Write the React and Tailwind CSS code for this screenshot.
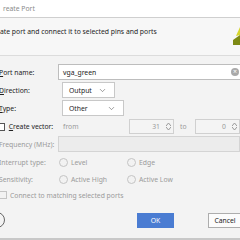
import { ChevronDown } from "lucide-react";

function Select({ value, width }) {
  return (
    <div
      className={`flex items-center justify-between h-[16px] border border-[#c8c8c8] bg-white pl-[6px] pr-[7px] ml-[1px] ${width}`}
    >
      <span>{value}</span>
      <ChevronDown size={9} strokeWidth={1.5} className="text-[#555]" />
    </div>
  );
}

function Spin({ value }) {
  return (
    <div className="flex items-center h-[15px] w-[47px] border border-[#d0d0d0] bg-[#f4f4f4] text-[#999]">
      <span className="flex-1 text-right pr-[4px]">{value}</span>
      <div className="flex flex-col items-center justify-center w-[9px]">
        <svg width="5" height="3" viewBox="0 0 5 3"><path d="M0 3 L2.5 0 L5 3" fill="none" stroke="#999" strokeWidth="1" /></svg>
        <svg width="5" height="3" viewBox="0 0 5 3" className="mt-[1px]"><path d="M0 0 L2.5 3 L5 0" fill="none" stroke="#999" strokeWidth="1" /></svg>
      </div>
    </div>
  );
}

function Radio({ label }) {
  return (
    <div className="flex items-center gap-[3px] text-[#9a9a9a]">
      <div className="w-[9px] h-[9px] rounded-full border border-[#c4c4c4] bg-[#f2f2f2]" />
      <span>{label}</span>
    </div>
  );
}

export default function App() {
  return (
    <div
      className="w-[240px] h-[240px] overflow-hidden bg-[#f3f3f3] text-[6.8px] leading-[9px] text-[#222] flex flex-col"
      style={{ fontFamily: '"Noto Sans", "Open Sans", sans-serif' }}
    >
      <div className="h-[18px] shrink-0 bg-white border-b border-[#cfcfcf] flex items-center pl-[3px] text-[#8a8a8a]">
        reate Port
      </div>
      <div className="h-[38px] shrink-0 bg-[#f7f7f7] border-b border-[#dcdcdc] flex items-start justify-between pt-[9px]">
        <span>ate port and connect it to selected pins and ports</span>
        <svg width="8" height="18" viewBox="0 0 8 18">
          <path d="M8 0 L8 8 L4 9 Z" fill="#d6d62a" />
          <path d="M8 8 L8 18 L1 18 L1 13 Z" fill="#7d8a14" />
        </svg>
      </div>
      <div className="grid grid-cols-[62px_1fr] gap-y-[2px] items-center pt-[8px] -ml-[1px]">
        <span><u>P</u>ort name:</span>
        <div className="flex items-center justify-between h-[16px] border border-[#bdbdbd] bg-white pl-[4px] pr-[2px] -ml-[3px] -mr-[2px]">
          <span>vga_green</span>
          <div className="w-[8px] h-[8px] rounded-full bg-[#a9a9a9] text-white text-[7px] leading-[8px] text-center">×</div>
        </div>
        <span><u>D</u>irection:</span>
        <Select value="Output" width="w-[53px]" />
        <span><u>T</u>ype:</span>
        <Select value="Other" width="w-[62px]" />
      </div>
      <div className="flex items-center h-[17px] mt-[2px] -ml-[3px]">
        <div className="w-[8px] h-[8px] border border-[#555] bg-white" />
        <span className="ml-[4px] w-[48px]"><u>C</u>reate vector:</span>
        <span className="ml-[8px] text-[#9a9a9a] w-[68px]">from</span>
        <Spin value="31" />
        <span className="ml-[6px] mr-[8px] text-[#9a9a9a]">to</span>
        <Spin value="0" />
      </div>
      <div className="grid grid-cols-[62px_1fr] items-center mt-[1px] -ml-[1px] text-[#9a9a9a]">
        <span>Frequency (MHz):</span>
        <div className="h-[16px] border border-[#d4d4d4] bg-[#ececec] -ml-[3px]" />
      </div>
      <div className="grid grid-cols-[60px_68px_1fr] items-center h-[18px] mt-[1px] -ml-[1px] text-[#9a9a9a]">
        <span>Interrupt type:</span>
        <Radio label="Level" />
        <Radio label="Edge" />
      </div>
      <div className="grid grid-cols-[60px_68px_1fr] items-center h-[17px] -ml-[1px] text-[#9a9a9a]">
        <span>Sensitivity:</span>
        <Radio label="Active High" />
        <Radio label="Active Low" />
      </div>
      <div className="flex items-center h-[14px] -ml-[1px] text-[#9a9a9a]">
        <div className="w-[8px] h-[8px] border border-[#c4c4c4] bg-[#f2f2f2]" />
        <span className="ml-[3px]">Connect to matching selected ports</span>
      </div>
      <div className="flex items-center justify-between mt-[10px] h-[16px]">
        <div className="w-[16px] h-[16px] rounded-full border border-[#666] -ml-[11px]" />
        <div className="flex gap-[34px] -mr-[2px]">
          <div className="w-[37px] h-[15px] bg-[#4a7cd2] text-white flex items-center justify-center">OK</div>
          <div className="w-[34px] h-[15px] bg-[#fcfcfc] border border-[#adadad] flex items-center justify-center">Cancel</div>
        </div>
      </div>
      <div className="flex-1" />
      <div className="h-[2px] bg-[#c8c8c8]" />
    </div>
  );
}
